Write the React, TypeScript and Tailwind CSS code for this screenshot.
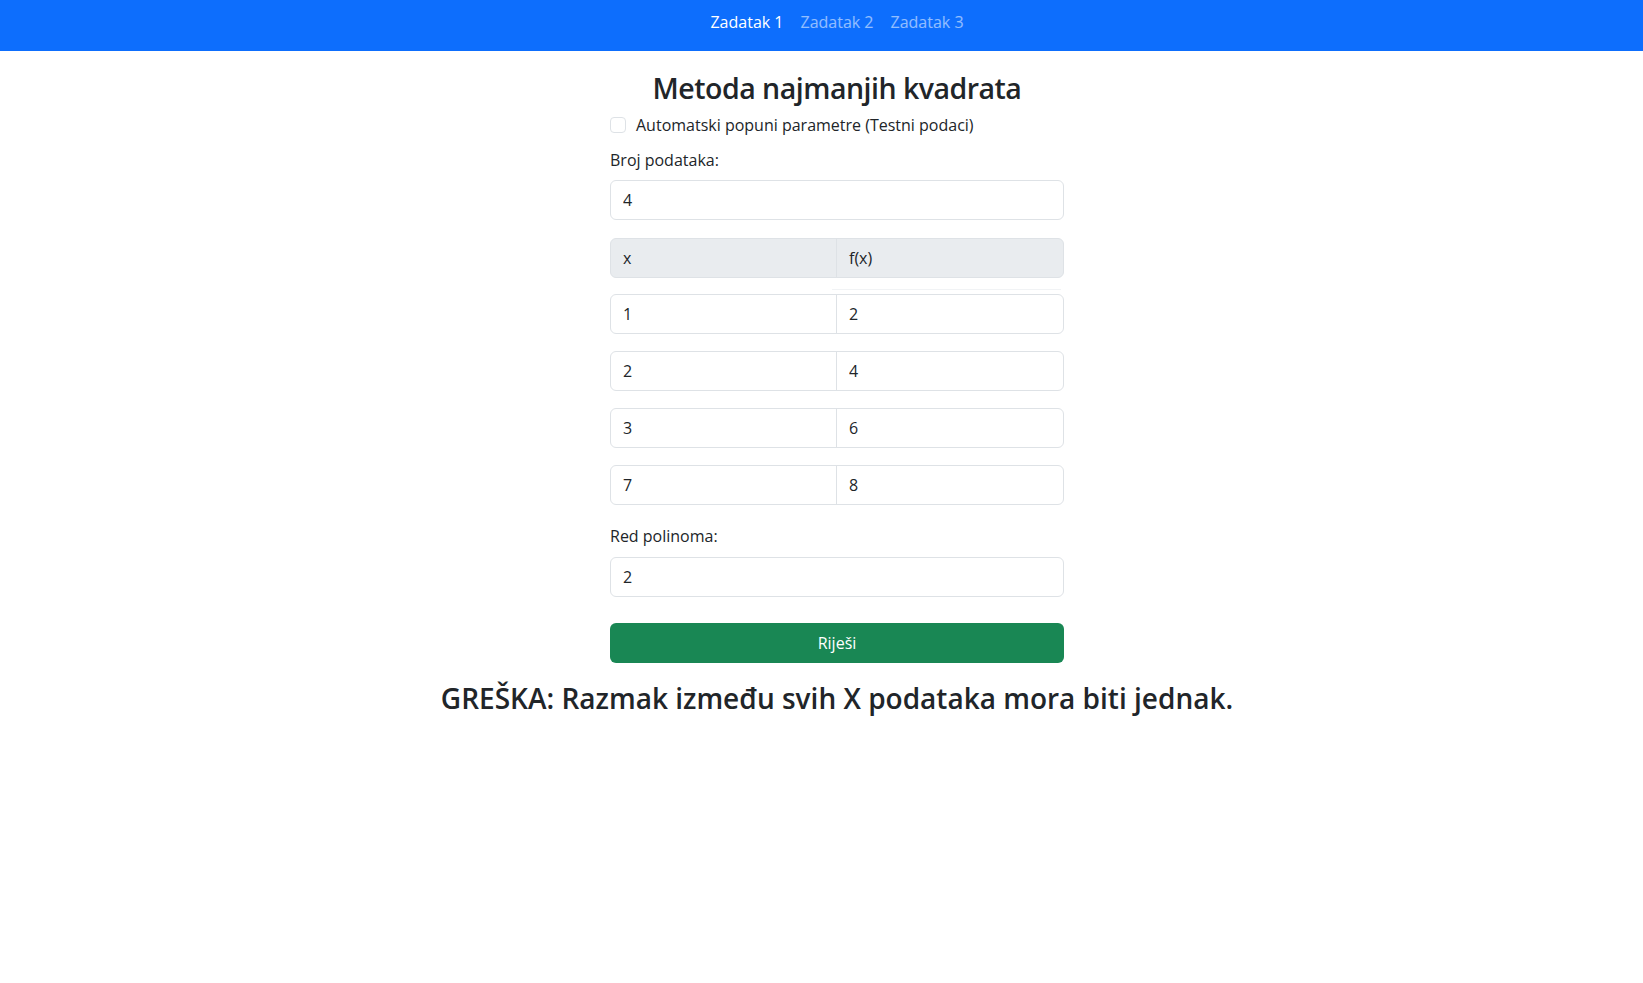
import { useState } from "react";

const rows = [
	["1", "2"],
	["2", "4"],
	["3", "6"],
	["7", "8"],
];

const font = { fontFamily: '"Open Sans", "Noto Sans", sans-serif' };

const App = () => {
	const [auto, setAuto] = useState(false);

	return (
		<div className="min-h-screen bg-white text-[#212529]" style={font}>
			<nav className="h-[51px] bg-[#0d6efd]">
				<ul className="flex h-full items-center justify-center gap-[17px] pb-[8px] pl-[31px] text-[16px] leading-6">
					<li className="text-white">Zadatak 1</li>
					<li className="text-white/55">Zadatak 2</li>
					<li className="text-white/55">Zadatak 3</li>
				</ul>
			</nav>

			<main className="flex flex-col items-center pl-[31px]">
				<div className="flex w-[454px] flex-col">
					<h2 className="mb-2 mt-[20px] text-center text-[28.5px] font-semibold leading-[1.2] tracking-[-0.5px]">Metoda najmanjih kvadrata</h2>

					<label className="flex h-6 items-center gap-[10px] text-[16px] leading-6">
						<input
							type="checkbox"
							checked={auto}
							onChange={(e) => setAuto(e.target.checked)}
							className="h-4 w-4 appearance-none rounded-[4px] border border-[#dee2e6] bg-white"
						/>
						<span>Automatski popuni parametre (Testni podaci)</span>
					</label>

					<label className="mb-2 mt-[11px] text-[16px] leading-6">Broj podataka:</label>
					<input
						defaultValue="4"
						className="h-[40px] w-full rounded-[6px] border border-[#dee2e6] px-3 text-[16px] outline-none"
					/>

					<div className="mt-[18px] flex h-[40px] rounded-[6px] border border-[#dee2e6] bg-[#e9ecef] text-[16px]">
						<div className="flex w-1/2 items-center border-r border-[#dee2e6] px-3">x</div>
						<div className="flex w-1/2 items-center px-3">f(x)</div>
					</div>
					<div className="ml-[222px] mr-[3px] mt-[11px] h-px bg-[#f1f3f5]" />

					<div className="mt-[4px] flex flex-col gap-[17px]">
						{rows.map(([x, y], i) => (
							<div key={i} className="flex h-[40px] rounded-[6px] border border-[#dee2e6] text-[16px]">
								<input defaultValue={x} className="w-1/2 min-w-0 rounded-l-[6px] border-r border-[#dee2e6] px-3 outline-none" />
								<input defaultValue={y} className="w-1/2 min-w-0 rounded-r-[6px] px-3 outline-none" />
							</div>
						))}
					</div>

					<label className="mb-[9px] mt-[19px] text-[16px] leading-6">Red polinoma:</label>
					<input
						defaultValue="2"
						className="h-[40px] w-full rounded-[6px] border border-[#dee2e6] px-3 text-[16px] outline-none"
					/>

					<button className="mt-[26px] h-[40px] w-full rounded-[6px] bg-[#198754] text-[16px] text-white">Riješi</button>
				</div>

				<h3 className="mt-[19px] text-center text-[28px] font-semibold leading-[1.2]">GREŠKA: Razmak između svih X podataka mora biti jednak.</h3>
			</main>
		</div>
	);
};

export default App;
